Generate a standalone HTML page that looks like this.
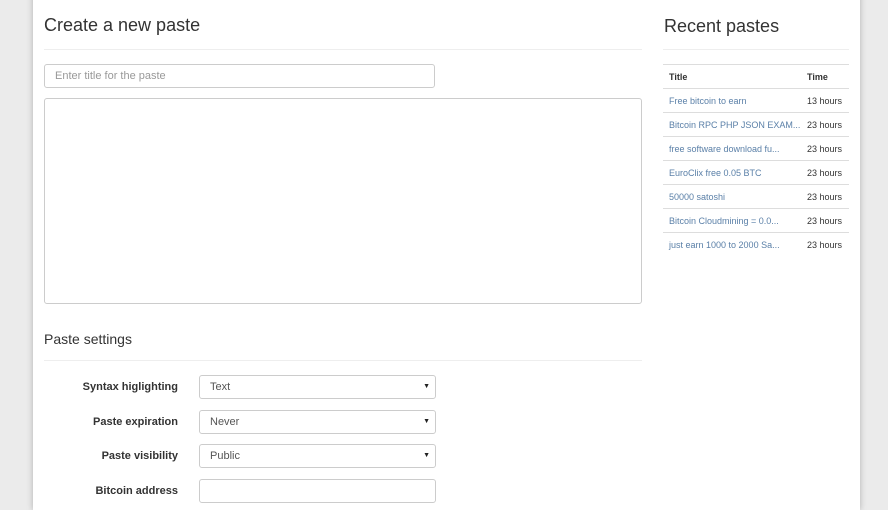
<!DOCTYPE html>
<html><head><style>
*{box-sizing:border-box;margin:0;padding:0}
body{width:888px;height:500px;overflow:hidden;background:#ebebeb;font-family:"Liberation Sans",Arial,sans-serif;color:#333;position:relative}
.panel{position:absolute;left:33px;top:-10px;width:827px;height:520px;background:#fff;box-shadow:0 0 6px rgba(0,0,0,.25)}
.a{position:absolute}
h1{font-weight:normal;font-size:18px;color:#333}
.hr{position:absolute;height:1px;background:#eee}
.in{position:absolute;border:1px solid #ccc;border-radius:3px;background:#fff;font-size:11px;color:#555;padding-left:10px;line-height:22px}
.in .ar{position:absolute;right:5px;top:0;font-size:7px;color:#222}
.lbl{position:absolute;width:150px;left:28px;text-align:right;font-size:11px;font-weight:bold;color:#333}
table{position:absolute;left:663px;top:64px;width:186px;border-collapse:collapse;font-size:9px;table-layout:fixed}
td,th{height:24px;border-top:1px solid #ddd;text-align:left;padding-left:6px;white-space:nowrap;overflow:hidden}
th{font-weight:bold;border-bottom:1px solid #ddd}
td.t{color:#5b80a8}
</style></head><body>
<div class="panel"></div>
<h1 class="a" style="left:44px;top:15px">Create a new paste</h1>
<div class="hr" style="left:44px;top:49px;width:598px"></div>
<div class="in" style="left:44px;top:64px;width:391px;height:24px;color:#999">Enter title for the paste</div>
<div class="in" style="left:44px;top:98px;width:598px;height:206px"></div>
<div class="a" style="left:44px;top:331px;font-size:14px">Paste settings</div>
<div class="hr" style="left:44px;top:360px;width:598px"></div>
<div class="lbl" style="top:381px">Syntax higlighting</div>
<div class="in" style="left:199px;top:375px;width:237px;height:24px">Text<span class="ar">▼</span></div>
<div class="lbl" style="top:416px">Paste expiration</div>
<div class="in" style="left:199px;top:410px;width:237px;height:24px">Never<span class="ar">▼</span></div>
<div class="lbl" style="top:450px">Paste visibility</div>
<div class="in" style="left:199px;top:444px;width:237px;height:24px">Public<span class="ar">▼</span></div>
<div class="lbl" style="top:485px">Bitcoin address</div>
<div class="in" style="left:199px;top:479px;width:237px;height:24px"></div>
<h1 class="a" style="left:664px;top:16px">Recent pastes</h1>
<div class="hr" style="left:663px;top:49px;width:186px"></div>
<table>
<tr><th style="width:138px">Title</th><th style="width:48px">Time</th></tr>
<tr><td class="t">Free bitcoin to earn</td><td>13 hours</td></tr>
<tr><td class="t">Bitcoin RPC PHP JSON EXAM...</td><td>23 hours</td></tr>
<tr><td class="t">free software download fu...</td><td>23 hours</td></tr>
<tr><td class="t">EuroClix free 0.05 BTC</td><td>23 hours</td></tr>
<tr><td class="t">50000 satoshi</td><td>23 hours</td></tr>
<tr><td class="t">Bitcoin Cloudmining = 0.0...</td><td>23 hours</td></tr>
<tr><td class="t">just earn 1000 to 2000 Sa...</td><td>23 hours</td></tr>
</table>
</body></html>
